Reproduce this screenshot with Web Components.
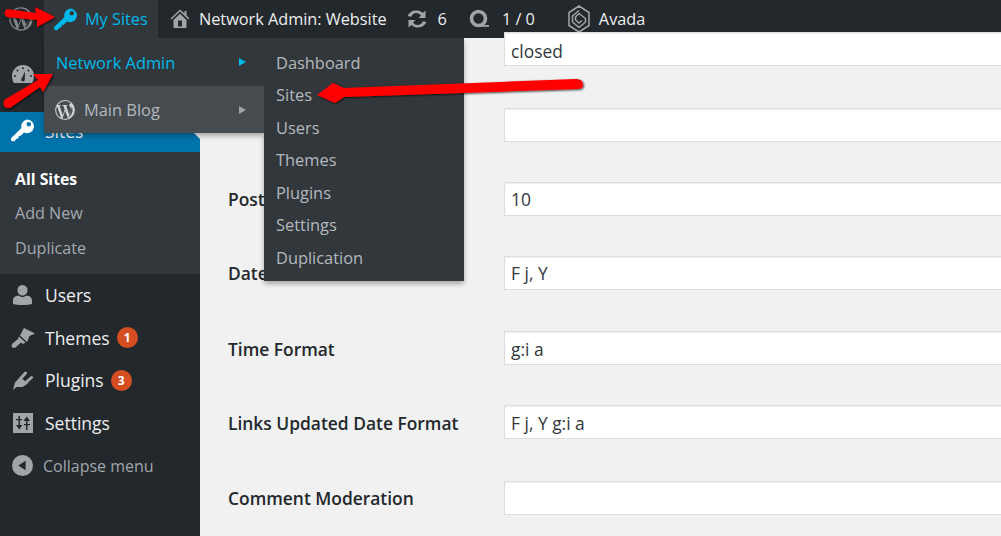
<!DOCTYPE html>
<html><head><meta charset="utf-8"><style>
html,body{margin:0;padding:0;height:536px;overflow:hidden;background:#f1f1f1;font-family:"Open Sans",sans-serif}
</style></head><body>
<wp-page></wp-page>
<template id="t-page"><style>
:host{display:grid;grid-template-rows:38px 498px;grid-template-columns:200px 801px;width:1001px;height:536px;overflow:hidden;position:relative}
wp-bar{grid-column:1/3}
</style>
<wp-bar></wp-bar><wp-side></wp-side><wp-form></wp-form><wp-flyout></wp-flyout><wp-arrows></wp-arrows></template>

<template id="t-bar"><style>
:host{display:flex;height:38px;background:#23282d;color:#eee;font-size:16.250px;align-items:center;white-space:nowrap}
.i{display:flex;align-items:center;height:38px}
svg{display:block;fill:#a0a5aa;flex:none}
.logo{width:44px;padding-left:8px;box-sizing:border-box}
.logo svg{fill:#82878c}
.my{width:114px;background:#32373c;color:#00b9eb;box-sizing:border-box;padding-left:10px;gap:8px}
.my svg{fill:#00b9eb}
.home{padding-left:12px;gap:9px}
.up{margin-left:19px;gap:10px}
.cm{margin-left:22px;gap:13px}
.av{margin-left:33px;gap:9px}
</style>
<div class="i logo"><svg width="26" height="26" viewBox="0 0 20 20"><path d="M10 1a9 9 0 1 0 0 18 9 9 0 0 0 0-18zM2 10c0-1.200.3-2.300.7-3.300L6.500 17.100A8 8 0 0 1 2 10zm8 8c-.8 0-1.500-.1-2.300-.3l2.400-7 2.500 6.800A8 8 0 0 1 10 18zm1.100-11.800c.5 0 1-.1 1-.1.4 0 .4-.7-.1-.7 0 0-1.300.1-2.200.1-.8 0-2.100-.1-2.100-.1-.5 0-.5.7-.1.700l.9.1 1.200 3.400-1.700 5.200-2.900-8.600c.5 0 .9-.1.9-.1.5 0 .4-.7 0-.7 0 0-1.300.1-2.200.1h-.5A8 8 0 0 1 15.400 4h-.1c-.8 0-1.400.7-1.400 1.500 0 .7.400 1.300.9 2 .3.600.7 1.300.7 2.300 0 .7-.3 1.600-.6 2.700l-.8 2.700zM13 17l2.400-7c.5-1.100.6-2 .6-2.800 0-.3 0-.6-.1-.8A8 8 0 0 1 13 17z" fill-rule="evenodd"/></svg></div>
<div class="i my"><svg width="23" height="23" viewBox="0 0 22 22"><path fill-rule="evenodd" d="M15.500.5a6.500 6.500 0 1 1-3 12.300L9 16.300 7.500 16l-.5 2.500-2 .7-2 2.300L0 20.500v-2L10 8.500A6.500 6.500 0 0 1 15.500.5zM17 2.800a2.200 2.200 0 1 0 0 4.400 2.200 2.200 0 0 0 0-4.400z"/></svg><span>My Sites</span></div>
<div class="i home"><svg width="20" height="20" viewBox="0 0 20 20"><path d="M10 .5L.5 9.500l1 1L10 2.500l8.500 8 1-1-3-3V2h-2v2.500zM3.500 11L10 4.800 16.500 11v8H3.500zM8 11.500V17.500h4V11.500z" fill-rule="evenodd"/></svg><span>Network Admin: Website</span></div>
<div class="i up"><svg width="22" height="20" viewBox="0 0 22 20"><path d="M11 1.500c2.300 0 4.300 1 5.700 2.600L19.500 1.500V9h-7l2.500-2.500a5.400 5.400 0 0 0-9.700 1.200L1.500 7A9.500 9.500 0 0 1 11 1.500zM2.500 11h7L7 13.500a5.400 5.400 0 0 0 9.700-1.200l3.800.7A9.500 9.500 0 0 1 5.300 15.900L2.500 18.500z"/></svg><span>6</span></div>
<div class="i cm"><svg width="20" height="20" viewBox="0 0 20 20"><circle cx="9.500" cy="9.500" r="7" fill="none" stroke="#a0a5aa" stroke-width="3.600"/><path d="M12 16h8v1.800h-8z"/></svg><span>1 / 0</span></div>
<div class="i av"><svg width="22" height="28" viewBox="0 0 22 28" style="fill:none;stroke:#a0a5aa;stroke-width:1.500"><path d="M11 1l10 6.500v13L11 27 1 20.500v-13zM11 5.500L4.500 11v6l6.500 5.500 6.500-5.500v-3.500L11 8.500 7.500 12v3l3.500 3 3-2.500"/></svg><span>Avada</span></div></template>

<template id="t-side"><style>
:host{display:block;background:#23282d;height:498px;color:#eee;font-size:17.500px;position:relative}
.d{height:74px;padding:27px 0 0 12px;box-sizing:border-box}
.cur{height:40px;background:#0073aa;display:flex;align-items:center;color:#fff;position:relative;padding-bottom:3px;box-sizing:border-box}
.cur:after{content:"";position:absolute;right:0;top:11px;border:8px solid transparent;border-right-color:#f1f1f1}
.ic{width:45px;flex:none;display:flex;padding-left:11px;box-sizing:border-box}
.sub{height:122px;background:#32373c;font-size:16.100px;color:#a4aab0;padding-top:10px;box-sizing:border-box}
.sub div{height:34px;line-height:34px;padding-left:15px}
.sub div:nth-child(2){margin-bottom:1px}
.sub b{color:#fff;font-weight:700;font-size:15.800px}
.it{height:42.600px;display:flex;align-items:center}
svg{display:block;fill:#a0a5aa;flex:none}
.bd{display:inline-flex;width:21px;height:21px;border-radius:50%;background:#d54e21;color:#fff;font-size:12px;font-weight:700;align-items:center;justify-content:center;margin-left:7px}
.col{color:#a0a5aa;font-size:16px}
.col .ic{width:43px;padding-left:12px}
</style>
<div class="d"><svg width="22" height="18" viewBox="0 0 22 18"><path fill-rule="evenodd" d="M11 0a11 11 0 0 1 11 11c0 2.500-.7 4.800-1.800 7H1.800C.7 15.800 0 13.500 0 11A11 11 0 0 1 11 0zm0 2.200a1 1 0 1 0 0 2 1 1 0 0 0 0-2zM5.500 4.500a1 1 0 1 0 0 2 1 1 0 0 0 0-2zm11 0a1 1 0 1 0 0 2 1 1 0 0 0 0-2zM3 10a1 1 0 1 0 0 2 1 1 0 0 0 0-2zm16 0a1 1 0 1 0 0 2 1 1 0 0 0 0-2zM13 6.500l-3.200 6.800a1.800 1.800 0 1 0 3 1.200z"/></svg></div>
<div class="cur"><span class="ic"><svg width="23" height="23" viewBox="0 0 22 22" style="fill:#fff"><path fill-rule="evenodd" d="M15.500.5a6.500 6.500 0 1 1-3 12.300L9 16.300 7.500 16l-.5 2.500-2 .7-2 2.300L0 20.500v-2L10 8.500A6.500 6.500 0 0 1 15.500.5zM17 2.800a2.200 2.200 0 1 0 0 4.400 2.200 2.200 0 0 0 0-4.400z"/></svg></span><span>Sites</span></div>
<div class="sub"><div><b>All Sites</b></div><div>Add New</div><div>Duplicate</div></div>
<div class="it"><span class="ic"><svg style="margin-left:2px" width="19" height="20" viewBox="0 0 19 20"><path d="M9.500 0a5 5 0 0 1 5 5.200c0 2.600-1.700 5.300-5 5.300s-5-2.700-5-5.300A5 5 0 0 1 9.500 0zM13.500 10.500c3 .3 5.500 1.800 5.500 5V19c-2.500.8-6 1-9.500 1S2.500 19.800 0 19v-3.500c0-3.200 2.500-4.700 5.500-5 1.100.9 2.500 1.500 4 1.500s2.900-.6 4-1.500z"/></svg></span><span>Users</span></div>
<div class="it"><span class="ic"><svg width="24" height="20" viewBox="0 0 24 20"><path d="M13 0L24 5.500 18.500 8 16 14 9 7.500zM8 8.500L14.500 14.500 12 16 10 14.500 4.500 19.500Q2.500 20.500 1 19 0 17.500 1.500 15.500L7 11z"/></svg></span><span>Themes</span><span class="bd">1</span></div>
<div class="it"><span class="ic"><svg style="margin-left:2px" width="20" height="19" viewBox="0 0 20 19"><path d="M0 19L2 11.500 7 6 15 12.500 9.500 16H3.500z"/><path d="M8.500 6.500L12.500 2M13.500 11L18.500 6.500" stroke="#a0a5aa" stroke-width="3" stroke-linecap="round"/></svg></span><span>Plugins</span><span class="bd">3</span></div>
<div class="it"><span class="ic"><svg style="margin-left:2px" width="20" height="20" viewBox="0 0 20 20"><path d="M0 0h20v20H0z"/><path fill="#23282d" d="M5.500 3h1.500v9h2.500l-3.250 4.500L3 12h2.500zM13 8H10.500L13.750 3.500 17 8h-2.500v9H13zM11 11h6v1.200h-6zM3 6h6v1.200H3z"/></svg></span><span>Settings</span></div>
<div class="it col"><span class="ic"><svg width="21" height="21" viewBox="0 0 20 20"><path fill-rule="evenodd" d="M10 0a10 10 0 1 1 0 20 10 10 0 0 1 0-20zm3 5.500L6 10l7 4.500z"/></svg></span><span>Collapse menu</span></div></template>

<template id="t-form"><style>
:host{display:grid;grid-template-columns:276px 1fr;grid-template-rows:76px 74px 74px 75px 74px 76px 34px;padding:0 0 0 28px;margin-top:-6px;align-content:start;height:504px;color:#23282d;font-size:17.400px;font-weight:600}
label{display:flex;align-items:center;height:34px;box-sizing:border-box}
.f{height:34px;width:520px;box-sizing:border-box;background:#fff;border:1px solid #ddd;font-size:17.400px;font-weight:400;color:#32373c;display:flex;align-items:center;padding-left:6px;box-shadow:inset 0 1px 2px rgba(0,0,0,.07)}
.low{padding-top:1px}
.first{padding-top:4px}
</style>
<label></label><div class="f first">closed</div>
<label></label><div class="f"></div>
<label>Posts per page</label><div class="f">10</div>
<label>Date Format</label><div class="f">F j, Y</div>
<label class="low">Time Format</label><div class="f low">g:i a</div>
<label class="low">Links Updated Date Format</label><div class="f low">F j, Y g:i a</div>
<label>Comment Moderation</label><div class="f"></div></template>

<template id="t-fly"><style>
:host{position:absolute;left:44px;top:38px;display:flex;align-items:flex-start;font-size:16.400px;color:#b4b9be;white-space:nowrap}
.a{width:220px;box-shadow:0 3px 5px rgba(0,0,0,.3)}
.r{height:48px;display:flex;align-items:center;background:#32373c;padding:1px 0 0 12px;position:relative;box-sizing:border-box}
.r.l{background:#464b50;padding:0 0 0 10px;gap:8px;height:47px}
.act{color:#00b9eb}
.tri{position:absolute;right:18px;top:50%;margin-top:-4px;border:4px solid transparent;border-left:7px solid #00b9eb;border-right:0}
.l .tri{border-left-color:#a0a5aa}
svg{fill:#d0d3d6;display:block}
.b{width:200px;background:#32373c;padding:8.500px 0 6.500px;box-shadow:0 3px 5px rgba(0,0,0,.3)}
.b div{height:32.500px;line-height:32.500px;padding-left:12px}
</style>
<div class="a"><div class="r act">Network Admin<span class="tri"></span></div>
<div class="r l"><svg width="22" height="22" viewBox="0 0 20 20"><path fill-rule="evenodd" d="M10 1a9 9 0 1 0 0 18 9 9 0 0 0 0-18zM2 10c0-1.200.3-2.300.7-3.300L6.500 17.100A8 8 0 0 1 2 10zm8 8c-.8 0-1.500-.1-2.300-.3l2.400-7 2.500 6.800A8 8 0 0 1 10 18zm1.100-11.800c.5 0 1-.1 1-.1.4 0 .4-.7-.1-.7 0 0-1.300.1-2.200.1-.8 0-2.100-.1-2.100-.1-.5 0-.5.7-.1.700l.9.1 1.200 3.400-1.700 5.200-2.900-8.600c.5 0 .9-.1.9-.1.5 0 .4-.7 0-.7 0 0-1.300.1-2.200.1h-.5A8 8 0 0 1 15.400 4h-.1c-.8 0-1.400.7-1.400 1.500 0 .7.400 1.300.9 2 .3.600.7 1.300.7 2.300 0 .7-.3 1.600-.6 2.700l-.8 2.700zM13 17l2.400-7c.5-1.100.6-2 .6-2.800 0-.3 0-.6-.1-.8A8 8 0 0 1 13 17z"/></svg>Main Blog<span class="tri"></span></div></div>
<div class="b"><div>Dashboard</div><div>Sites</div><div>Users</div><div>Themes</div><div>Plugins</div><div>Settings</div><div>Duplication</div></div></template>

<template id="t-arrows"><style>
:host{position:absolute;left:0;top:0;width:1001px;height:536px;pointer-events:none}
svg{display:block;overflow:visible}
</style>
<svg width="1001" height="536" viewBox="0 0 1001 536"><defs><filter id="s" x="-10%" y="-50%" width="120%" height="200%"><feDropShadow dx="1" dy="1" stdDeviation="1" flood-color="#000" flood-opacity=".75"/></filter></defs>
<g fill="#f00" filter="url(#s)">
<path d="M7 9L36 13 35 7 55 17 37 27 37 20 7 17Q2 13 7 9z"/>
<path d="M4 100L38 80 33 74 53 74 43 92 40 87 10 108Q2 109 4 100z"/>
<path d="M576 79Q583 79 583 85 583 89 577 89L344 97 335 103 317 95 333 83 344 88z"/>
</g></svg></template>

<script>
function def(n,t){customElements.define(n,class extends HTMLElement{constructor(){super();this.attachShadow({mode:"open"}).appendChild(document.getElementById(t).content.cloneNode(true))}})}
def("wp-bar","t-bar");def("wp-side","t-side");def("wp-form","t-form");def("wp-flyout","t-fly");def("wp-arrows","t-arrows");def("wp-page","t-page");
</script>
</body></html>
